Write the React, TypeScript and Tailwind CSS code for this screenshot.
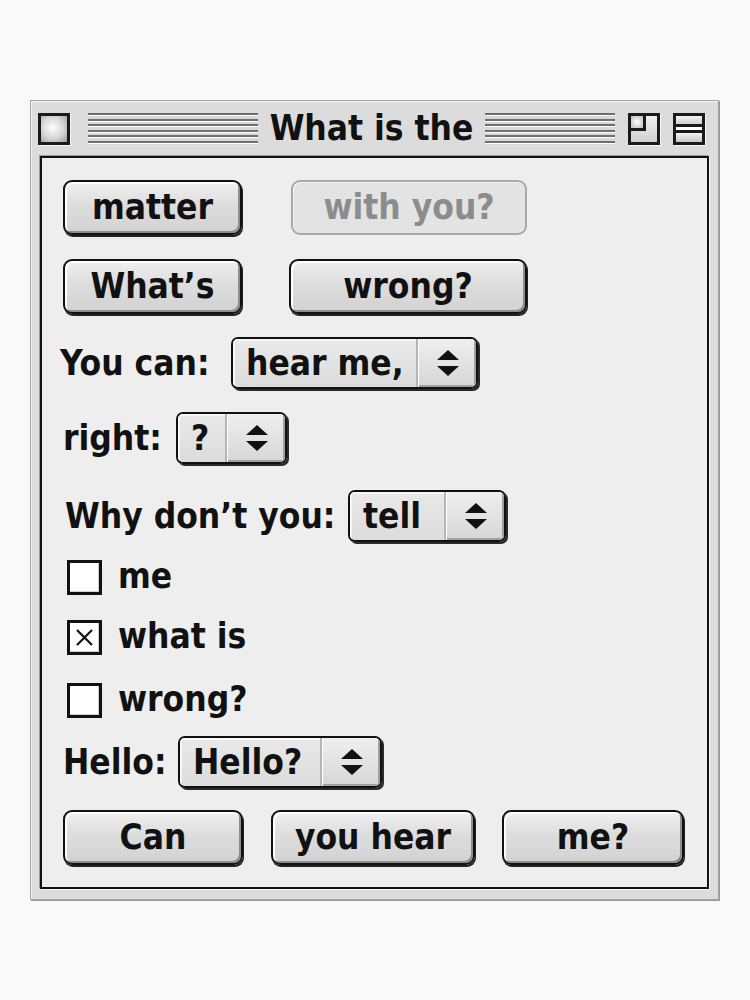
import type { ReactNode } from "react";

const face =
  "font-['DejaVu_Sans_Condensed','DejaVu_Sans',sans-serif] [font-stretch:condensed] font-bold";

function Button({
  children,
  className,
  disabled,
}: {
  children: ReactNode;
  className: string;
  disabled?: boolean;
}) {
  if (disabled) {
    return (
      <div
        className={`${className} h-[55px] flex items-center justify-center rounded-[9px] border-2 border-[#a9a9a9] bg-[#e3e3e3] text-[35px] text-[#8c8c8c] shadow-[inset_1px_1px_0_#f6f6f6]`}
      >
        {children}
      </div>
    );
  }
  return (
    <div
      className={`${className} h-[55px] flex items-center justify-center rounded-[9px] border-2 border-[#111] bg-[linear-gradient(to_bottom,#f0f0f0,#dddddd_45%,#d2d2d2)] text-[35px] text-[#111] shadow-[inset_2px_2px_0_#ffffff,inset_-2px_-2px_0_#8d8d8d,1px_2px_0_#222]`}
    >
      {children}
    </div>
  );
}

function Arrows() {
  return (
    <svg width="22" height="27" viewBox="0 0 22 27">
      <polygon points="11,0 22,10 0,10" fill="#111" />
      <polygon points="0,16 22,16 11,26" fill="#111" />
    </svg>
  );
}

function Popup({ value, className }: { value: string; className: string }) {
  return (
    <div
      className={`${className} h-[52px] flex rounded-[7px] border-2 border-[#111] overflow-hidden shadow-[2px_2px_0_#2a2a2a]`}
    >
      <div className="flex-1 flex items-center pl-[13px] bg-[linear-gradient(to_bottom,#e9e9e9,#dcdcdc)] border-r-2 border-r-[#b5b5b5] text-[35px] text-[#111] shadow-[inset_2px_2px_0_#f7f7f7]">
        {value}
      </div>
      <div className="w-[58px] flex items-center justify-center bg-[linear-gradient(to_bottom,#efefef,#d6d6d6)] border-l border-l-white shadow-[inset_-2px_-2px_0_#a0a0a0]">
        <Arrows />
      </div>
    </div>
  );
}

function Check({ label, checked }: { label: string; checked?: boolean }) {
  return (
    <div className="flex items-center">
      <div className="ml-[4px] w-[35px] h-[35px] border-[3px] border-[#111] bg-white shadow-[inset_-1px_-1px_0_#cfcfcf] flex items-center justify-center">
        {checked && (
          <svg width="19" height="19" viewBox="0 0 19 19">
            <path d="M2 2 L17 17 M17 2 L2 17" stroke="#111" strokeWidth="2.2" />
          </svg>
        )}
      </div>
      <span className="ml-[16px] -mt-[3px] text-[35px] leading-none text-[#111]">{label}</span>
    </div>
  );
}

function Stripes({ className }: { className: string }) {
  return (
    <div
      className={`${className} h-[32px] bg-[repeating-linear-gradient(to_bottom,#6e6e6e_0px,#6e6e6e_2px,#ffffff_2px,#ffffff_3px,#d8d8d8_3px,#d8d8d8_5.5px)]`}
    />
  );
}

export default function App() {
  return (
    <div className={`${face} min-h-[1000px] w-[750px] bg-[#f9f9f9] pt-[100px] pl-[30px]`}>
      <div className="w-[689px] border border-[#a4a4a4] bg-[#dcdcdc] shadow-[inset_1px_1px_0_#f4f4f4,1px_1px_0_#9a9a9a] px-[9px] pb-[10px]">
        {/* title bar */}
        <div className="h-[55px] flex items-center -ml-[2px]">
          <div className="w-[32px] h-[32px] border-[3px] border-[#1a1a1a] bg-[radial-gradient(circle_at_45%_45%,#ffffff,#d5d5d5_55%,#9a9a9a)] shadow-[1px_1px_0_#f5f5f5]" />
          <Stripes className="ml-[18px] w-[170px]" />
          <div className="w-[227px] text-center text-[35px] leading-none text-[#111]">What is the</div>
          <Stripes className="w-[130px]" />
          <div className="ml-[13px] w-[32px] h-[32px] border-[3px] border-[#1a1a1a] bg-[linear-gradient(to_bottom,#f0f0f0,#d0d0d0)] shadow-[1px_1px_0_#f5f5f5]">
            <div className="w-[15px] h-[15px] border-r-[3px] border-b-[3px] border-[#1a1a1a] bg-[radial-gradient(circle,#ffffff,#b9b9b9)]" />
          </div>
          <div className="ml-[13px] w-[32px] h-[32px] border-[3px] border-[#1a1a1a] bg-[#e8e8e8] shadow-[1px_1px_0_#f5f5f5] flex flex-col">
            <div className="h-[8px] bg-[linear-gradient(to_bottom,#f4f4f4,#cfcfcf)]" />
            <div className="h-[9px] border-t-[3px] border-b-[3px] border-[#1a1a1a] bg-white" />
            <div className="flex-1 bg-[linear-gradient(to_bottom,#f4f4f4,#c8c8c8)]" />
          </div>
        </div>

        {/* content */}
        <div className="border-2 border-[#111] bg-[#eeeeee] shadow-[-1px_-1px_0_#9a9a9a,1px_1px_0_#f6f6f6] pl-[21px] pt-[22px] pb-[22px] leading-none">
          <div className="flex">
            <Button className="w-[179px]">matter</Button>
            <Button className="ml-[49px] w-[236px]" disabled>
              with you?
            </Button>
          </div>
          <div className="flex mt-[24px]">
            <Button className="w-[179px]">What’s</Button>
            <Button className="ml-[47px] w-[238px]">wrong?</Button>
          </div>

          <div className="flex items-center mt-[23px]">
            <span className="w-[171px] -ml-[3px] text-[35px] text-[#111]">You can:</span>
            <Popup value="hear me," className="w-[247px]" />
          </div>
          <div className="flex items-center mt-[23px]">
            <span className="w-[113px] text-[35px] text-[#111]">right:</span>
            <Popup value="?" className="w-[111px]" />
          </div>
          <div className="flex items-center mt-[26px]">
            <span className="w-[285px] pl-[2px] text-[35px] text-[#111]">Why don’t you:</span>
            <Popup value="tell" className="w-[158px]" />
          </div>

          <div className="mt-[18px]">
            <Check label="me" />
          </div>
          <div className="mt-[25px]">
            <Check label="what is" checked />
          </div>
          <div className="mt-[28px]">
            <Check label="wrong?" />
          </div>

          <div className="flex items-center mt-[18px]">
            <span className="w-[115px] text-[35px] text-[#111]">Hello:</span>
            <Popup value="Hello?" className="w-[204px]" />
          </div>

          <div className="flex mt-[22px]">
            <Button className="w-[180px]">Can</Button>
            <Button className="ml-[28px] w-[204px]">you hear</Button>
            <Button className="ml-[27px] w-[182px]">me?</Button>
          </div>
        </div>
      </div>
    </div>
  );
}
